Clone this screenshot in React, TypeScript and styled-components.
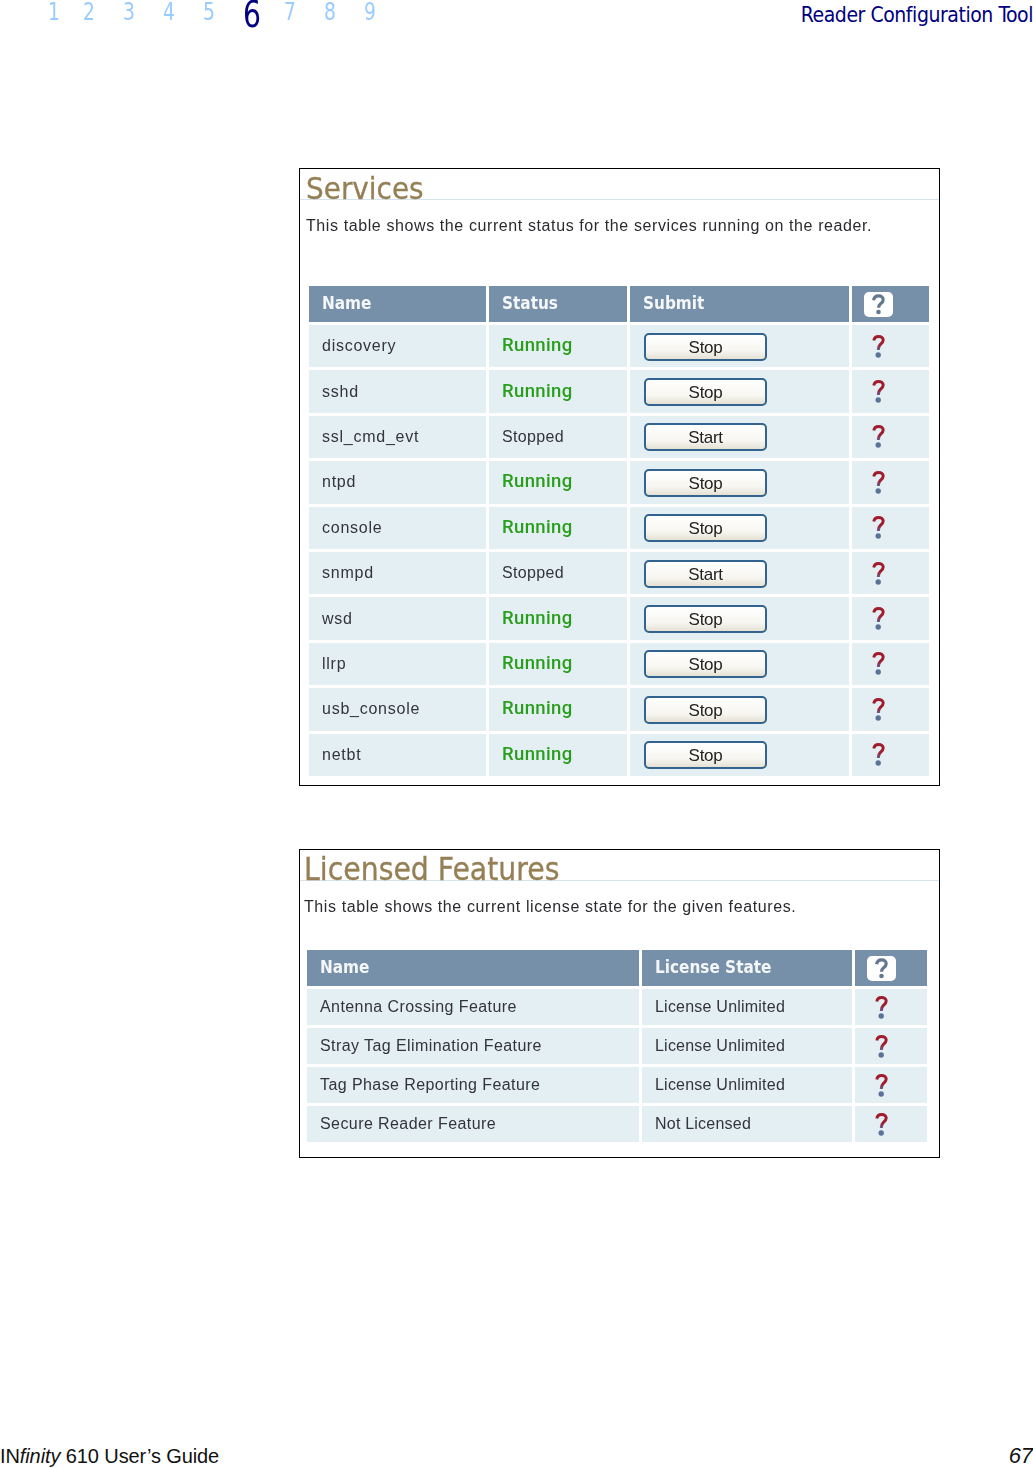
import React from "react";
import styled, { createGlobalStyle } from "styled-components";

const GlobalStyle = createGlobalStyle`
	html, body {
		margin: 0;
		padding: 0;
		background: #fff;
	}
`;

const Page = styled.div`
	width: 1033px;
	height: 1468px;
	display: flex;
	flex-direction: column;
	overflow: hidden;
	font-family: "Liberation Sans", Arial, sans-serif;
`;

const TopBar = styled.header`
	height: 168px;
	display: flex;
	align-items: flex-start;
	justify-content: space-between;
	flex-shrink: 0;
`;

const Chapters = styled.nav`
	display: flex;
	align-items: flex-start;
	padding-left: 48px;
`;

const Chapter = styled.span<{ $active?: boolean }>`
	display: inline-block;
	width: ${(p) => (p.$active ? 41 : 40)}px;
	font-family: "DejaVu Sans Condensed", "DejaVu Sans", sans-serif;
	font-stretch: condensed;
	font-size: ${(p) => (p.$active ? 37 : 24.5)}px;
	line-height: ${(p) => (p.$active ? 30.4 : 23)}px;
	color: ${(p) => (p.$active ? "#000080" : "#99ccff")};
	transform: scaleX(0.85);
	transform-origin: left top;

	&:first-child {
		width: 35px;
	}
`;

const DocTitle = styled.div`
	font-family: "DejaVu Sans Condensed", "DejaVu Sans", sans-serif;
	font-stretch: condensed;
	font-size: 21px;
	line-height: 30px;
	letter-spacing: -0.44px;
	color: #000080;
	white-space: nowrap;
`;

const Main = styled.main`
	flex: 1;
	display: flex;
	flex-direction: column;
	gap: 63px;
	margin-left: 299px;
	width: 641px;
`;

const Panel = styled.section<{ $height: number; $inset: number }>`
	box-sizing: border-box;
	height: ${(p) => p.$height}px;
	border: 1px solid #000;
	padding: 0 10px 0 ${(p) => p.$inset}px;
	background: #fff;
	filter: blur(0.35px);
`;

const Title = styled.h2<{ $size: number; $offset: number }>`
	margin: 0 -10px 0 -${(p) => p.$offset}px;
	padding-left: ${(p) => p.$offset - 3}px;
	height: 30px;
	font-family: "DejaVu Sans Condensed", "DejaVu Sans", sans-serif;
	font-stretch: condensed;
	font-weight: 400;
	font-size: ${(p) => p.$size}px;
	line-height: 38px;
	color: #957f55;
	-webkit-text-stroke: 0.3px #957f55;
	border-bottom: 1px solid #d5e3ea;
	white-space: nowrap;
`;

const Intro = styled.p<{ $left: number; $bottom: number }>`
	margin: 17px 0 ${(p) => p.$bottom}px ${(p) => p.$left}px;
	font-size: 16px;
	line-height: 18px;
	letter-spacing: 0.6px;
	color: #2c2c30;
	white-space: nowrap;
`;

const Table = styled.div<{ $columns: string }>`
	display: grid;
	grid-template-columns: ${(p) => p.$columns};
	column-gap: 3px;
	row-gap: 3px;
`;

const HeadCell = styled.div`
	box-sizing: border-box;
	height: 36px;
	display: flex;
	align-items: center;
	padding: 0 0 2px 13px;
	background: #7790a9;
	color: #f4f6f8;
	font-family: "DejaVu Sans Condensed", "DejaVu Sans", sans-serif;
	font-stretch: condensed;
	font-weight: 700;
	font-size: 17px;
`;

const HelpHead = styled(HeadCell)`
	padding: 0 0 0 12px;
`;

const Cell = styled.div<{ $height: number }>`
	height: ${(p) => p.$height}px;
	display: flex;
	align-items: center;
	padding-left: 13px;
	background: #e4eff4;
	color: #33353a;
	font-size: 16px;
	letter-spacing: 0.35px;
	white-space: nowrap;
`;

const ServiceName = styled(Cell)`
	letter-spacing: 0.75px;
`;

const FeatureName = styled(Cell)`
	letter-spacing: 0.42px;
`;

const LicenseState = styled(Cell)`
	letter-spacing: 0.22px;
`;

const IconCell = styled(Cell)`
	padding-left: 20px;
`;

const StatusText = styled.span<{ $running: boolean }>`
	margin-bottom: ${(p) => (p.$running ? 2 : 0)}px;
	color: ${(p) => (p.$running ? "#2a9e1c" : "#33353a")};
	font-family: ${(p) => (p.$running ? "Roboto, sans-serif" : "inherit")};
	font-weight: ${(p) => (p.$running ? 500 : 400)};
	font-size: ${(p) => (p.$running ? 18.5 : 16)}px;
`;

const ActionButton = styled.button`
	box-sizing: border-box;
	width: 123px;
	height: 28px;
	margin: 1px 0 0 1px;
	padding: 2px 0 0;
	border: 2px solid #33638f;
	border-radius: 5px;
	background: linear-gradient(#ffffff 0%, #f7f6f1 65%, #e4e1d4 100%);
	color: #222;
	font-family: "Liberation Sans", Arial, sans-serif;
	font-size: 17px;
	letter-spacing: -0.3px;
`;

const HeaderHelp = () => (
	<svg width="29" height="25" viewBox="0 0 29 25">
		<rect width="29" height="25" rx="5" fill="#fff" />
		<path
			d="M9.6 8.2C10 5.4 12 3.8 14.6 3.8c2.7 0 4.6 1.6 4.6 3.9 0 2-1.2 3-2.6 4-1.4 1-2 2-2 4"
			fill="none"
			stroke="#62798f"
			strokeWidth="3.2"
		/>
		<circle cx="14.5" cy="20" r="2.3" fill="#62798f" />
	</svg>
);

const RowHelp = () => (
	<svg width="13" height="23" viewBox="0 0 13 23">
		<defs>
			<linearGradient id="help-stem" x1="0" y1="0" x2="0" y2="1">
				<stop offset="0.6" stopColor="#a11c2c" />
				<stop offset="1" stopColor="#6b5a8c" />
			</linearGradient>
		</defs>
		<path
			d="M1.8 5.6C2.2 3 4 1.5 6.6 1.5c2.6 0 4.6 1.4 4.6 3.6 0 2-1.3 3-2.6 4.1C7.4 10.3 6.3 11.5 6.3 15"
			fill="none"
			stroke="url(#help-stem)"
			strokeWidth="3"
		/>
		<circle cx="6.2" cy="20" r="2.7" fill="#5a7199" />
	</svg>
);

const services: [string, boolean][] = [
	["discovery", true],
	["sshd", true],
	["ssl_cmd_evt", false],
	["ntpd", true],
	["console", true],
	["snmpd", false],
	["wsd", true],
	["llrp", true],
	["usb_console", true],
	["netbt", true],
];

const features = [
	["Antenna Crossing Feature", "License Unlimited"],
	["Stray Tag Elimination Feature", "License Unlimited"],
	["Tag Phase Reporting Feature", "License Unlimited"],
	["Secure Reader Feature", "Not Licensed"],
];

const Footer = styled.footer`
	display: flex;
	justify-content: space-between;
	align-items: flex-end;
	height: 24px;
	font-size: 20px;
	line-height: 24px;
	letter-spacing: -0.1px;
	color: #111;
`;

const PageNumber = styled.i`
	font-size: 22px;
`;

export default function App() {
	return (
		<Page>
			<GlobalStyle />
			<TopBar>
				<Chapters>
					{[1, 2, 3, 4, 5, 6, 7, 8, 9].map((n) => (
						<Chapter key={n} $active={n === 6}>
							{n}
						</Chapter>
					))}
				</Chapters>
				<DocTitle>Reader Configuration Tool</DocTitle>
			</TopBar>
			<Main>
				<Panel $height={618} $inset={9}>
					<Title $size={31} $offset={9}>Services</Title>
					<Intro $left={-3} $bottom={51}>
						This table shows the current status for the services running on the reader.
					</Intro>
					<Table $columns="177px 138px 219px 77px">
						<HeadCell>Name</HeadCell>
						<HeadCell>Status</HeadCell>
						<HeadCell>Submit</HeadCell>
						<HelpHead>
							<HeaderHelp />
						</HelpHead>
						{services.map(([name, running]) => (
							<React.Fragment key={name}>
								<ServiceName $height={42.4}>{name}</ServiceName>
								<Cell $height={42.4}>
									<StatusText $running={running}>{running ? "Running" : "Stopped"}</StatusText>
								</Cell>
								<Cell $height={42.4}>
									<ActionButton>{running ? "Stop" : "Start"}</ActionButton>
								</Cell>
								<IconCell $height={42.4}>
									<RowHelp />
								</IconCell>
							</React.Fragment>
						))}
					</Table>
				</Panel>
				<Panel $height={309} $inset={7}>
					<Title $size={31.5} $offset={7}>Licensed Features</Title>
					<Intro $left={-3} $bottom={34}>
						This table shows the current license state for the given features.
					</Intro>
					<Table $columns="332px 210px 72px">
						<HeadCell>Name</HeadCell>
						<HeadCell>License State</HeadCell>
						<HelpHead>
							<HeaderHelp />
						</HelpHead>
						{features.map(([name, state]) => (
							<React.Fragment key={name}>
								<FeatureName $height={36}>{name}</FeatureName>
								<LicenseState $height={36}>{state}</LicenseState>
								<IconCell $height={36}>
									<RowHelp />
								</IconCell>
							</React.Fragment>
						))}
					</Table>
				</Panel>
			</Main>
			<Footer>
				<span>
					IN<i>finity</i> 610 User’s Guide
				</span>
				<PageNumber>67</PageNumber>
			</Footer>
		</Page>
	);
}
